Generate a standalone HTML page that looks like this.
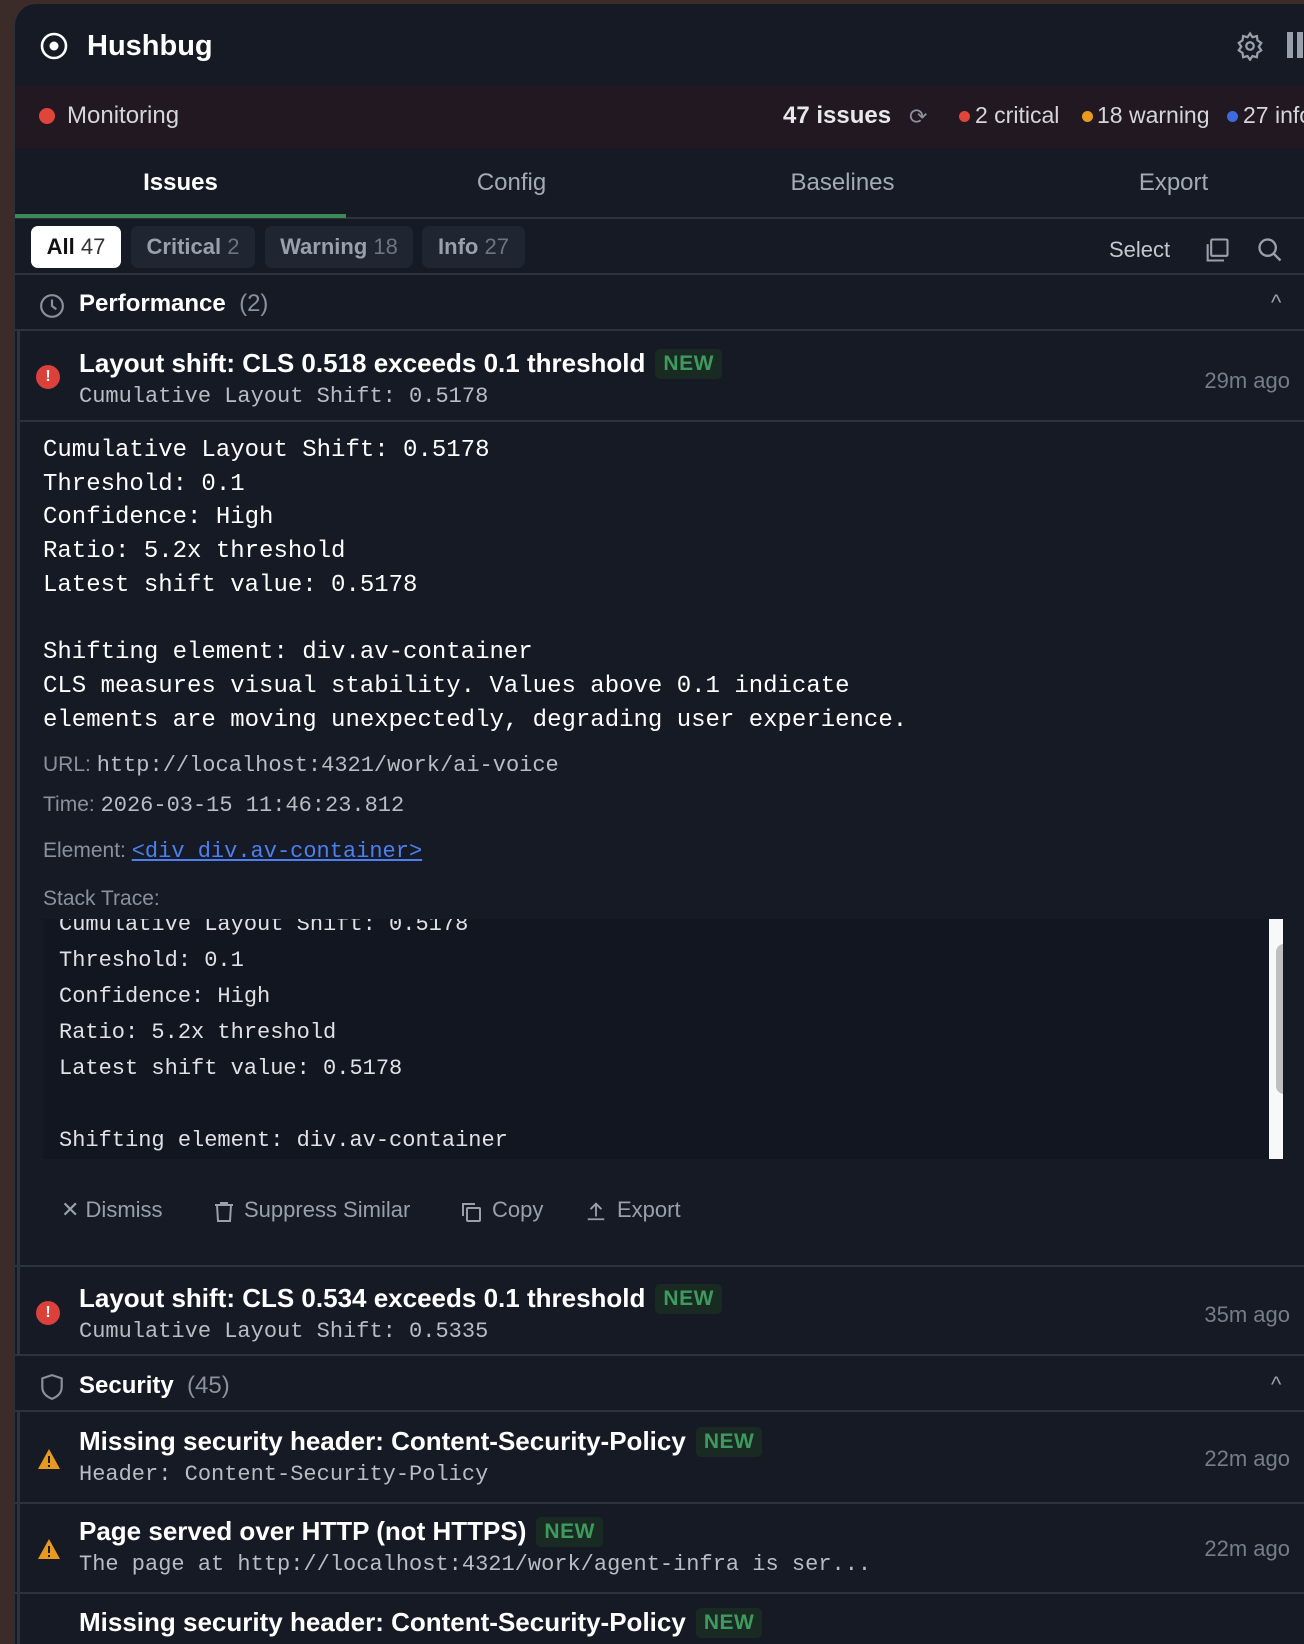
<!DOCTYPE html>
<html><head><meta charset="utf-8"><style>
*{margin:0;padding:0;box-sizing:border-box}
body{width:1304px;height:1626px;overflow:hidden;background:#3b2c29;font-family:"Liberation Sans",sans-serif;color:#e6e8ec;position:relative}
.win{position:absolute;left:14px;top:4px;width:1320px;height:1640px;background:#151a25;border-radius:22px 0 0 0;overflow:hidden;border-left:1px solid #2a2f3a}
.a{position:absolute;white-space:pre}
.mono{font-family:"Liberation Mono",monospace}
.hr{position:absolute;left:0;width:1320px;height:2px;background:#2c323e}
.new{display:inline-block;vertical-align:2px;margin-left:10px;background:#182a22;color:#3f9a5f;font-weight:bold;font-size:21px;padding:3px 8px;border-radius:5px;letter-spacing:0.5px}
.t{font-size:26px;font-weight:bold;color:#fff}
.chip{position:absolute;top:222px;height:42px;border-radius:7px;background:#1f2531;color:#9aa0ab;font-size:22px;font-weight:bold;line-height:42px;text-align:center}
.chip span{font-weight:normal;color:#6f7580}
.row{position:absolute;left:2px;width:1320px;border-left:3px solid #2c323e}
.ago{position:absolute;right:44px;font-size:22px;color:#777d88}
</style></head><body>
<div class="win">
<svg class="a" style="left:24px;top:27px" width="30" height="30" viewBox="0 0 30 30"><circle cx="15" cy="15" r="12" fill="none" stroke="#fff" stroke-width="2.6"/><circle cx="15" cy="15" r="4.5" fill="#fff"/></svg>
<div class="a" style="left:72px;top:26px;font-size:29px;font-weight:bold;color:#fff">Hushbug</div>
<svg class="a" style="left:1220px;top:27px" width="30" height="30" viewBox="0 0 24 24" fill="none" stroke="#9aa0ab" stroke-width="1.8"><circle cx="12" cy="12" r="3"/><path d="M12 2l2 3 3.5-1 .5 3.5 3 2-2 3 2 3-3 2-.5 3.5-3.5-1-2 3-2-3-3.5 1-.5-3.5-3-2 2-3-2-3 3-2 .5-3.5 3.5 1z"/></svg>
<div class="a" style="left:1272px;top:28px;width:6px;height:26px;background:#9aa0ab"></div>
<div class="a" style="left:1282px;top:28px;width:6px;height:26px;background:#9aa0ab"></div>
<div class="a" style="left:0;top:81px;width:1320px;height:63px;background:#211821"></div>
<div class="a" style="left:24px;top:104px;width:16px;height:16px;border-radius:50%;background:#e0453a"></div>
<div class="a" style="left:52px;top:98px;font-size:24px;color:#d4d6da">Monitoring</div>
<div class="a" style="left:768px;top:98px;font-size:24px;font-weight:bold;color:#e8e8ea">47 issues</div>
<div class="a" style="left:894px;top:100px;font-size:22px;color:#8a909c">⟳</div>
<div class="a" style="left:944px;top:107px;width:11px;height:11px;border-radius:50%;background:#e0453a"></div>
<div class="a" style="left:960px;top:98px;font-size:23px;color:#d4d6da">2 critical</div>
<div class="a" style="left:1067px;top:107px;width:11px;height:11px;border-radius:50%;background:#e89a20"></div>
<div class="a" style="left:1082px;top:98px;font-size:23px;color:#d4d6da">18 warning</div>
<div class="a" style="left:1212px;top:107px;width:11px;height:11px;border-radius:50%;background:#3d6ae0"></div>
<div class="a" style="left:1228px;top:98px;font-size:23px;color:#d4d6da">27 info</div>
<div class="a" style="left:0;top:165px;width:331px;text-align:center;font-size:24px;font-weight:bold;color:#fff">Issues</div>
<div class="a" style="left:331px;top:165px;width:331px;text-align:center;font-size:24px;color:#a4aab4">Config</div>
<div class="a" style="left:662px;top:165px;width:331px;text-align:center;font-size:24px;color:#a4aab4">Baselines</div>
<div class="a" style="left:993px;top:165px;width:331px;text-align:center;font-size:24px;color:#a4aab4">Export</div>
<div class="hr" style="top:213px"></div>
<div class="a" style="left:0;top:210px;width:331px;height:4px;background:#3a8a55"></div>
<div class="chip" style="left:16px;width:90px;background:#fff;color:#111">All <span style="color:#333">47</span></div>
<div class="chip" style="left:116px;width:124px">Critical <span>2</span></div>
<div class="chip" style="left:250px;width:148px">Warning <span>18</span></div>
<div class="chip" style="left:407px;width:103px">Info <span>27</span></div>
<div class="a" style="left:1094px;top:233px;font-size:22px;color:#c4c7cd">Select</div>
<svg class="a" style="left:1188px;top:232px" width="28" height="28" viewBox="0 0 24 24" fill="none" stroke="#9aa0ab" stroke-width="1.8"><rect x="7" y="3" width="14" height="14" rx="1"/><path d="M4 7v14h14"/></svg>
<svg class="a" style="left:1241px;top:232px" width="28" height="28" viewBox="0 0 24 24" fill="none" stroke="#9aa0ab" stroke-width="2"><circle cx="10" cy="10" r="7"/><path d="M15 15l6 6"/></svg>
<div class="hr" style="top:269px"></div>
<svg class="a" style="left:24px;top:289px" width="26" height="26" viewBox="0 0 24 24" fill="none" stroke="#8a909c" stroke-width="2"><circle cx="12" cy="12" r="10"/><path d="M12 6v6l4 3"/></svg>
<div class="a" style="left:64px;top:286px;font-size:24px;font-weight:bold;color:#fff">Performance <span style="font-weight:normal;color:#8a909c">&nbsp;(2)</span></div>
<div class="a" style="left:1256px;top:286px;font-size:22px;color:#9aa0ab">^</div>
<div class="hr" style="top:325px"></div>
<div class="row" style="top:327px;height:936px"></div>
<div class="a" style="left:21px;top:361px;width:24px;height:24px;border-radius:50%;background:#d9413a;color:#fff;font-size:16px;font-weight:bold;text-align:center;line-height:24px">!</div>
<div class="a t" style="left:64px;top:344px">Layout shift: CLS 0.518 exceeds 0.1 threshold<span class="new">NEW</span></div>
<div class="a mono" style="left:64px;top:380px;font-size:22px;color:#b8bcc4">Cumulative Layout Shift: 0.5178</div>
<div class="ago" style="top:364px">29m ago</div>
<div class="hr" style="top:416px;left:3px"></div>
<div class="a mono" style="left:28px;top:430px;font-size:24px;line-height:33.7px;color:#fff">Cumulative Layout Shift: 0.5178
Threshold: 0.1
Confidence: High
Ratio: 5.2x threshold
Latest shift value: 0.5178

Shifting element: div.av-container
CLS measures visual stability. Values above 0.1 indicate
elements are moving unexpectedly, degrading user experience.</div>
<div class="a" style="left:28px;top:749px;font-size:21px;color:#8a909c">URL: <span class="mono" style="font-size:22px;color:#b8bcc4">http://localhost:4321/work/ai-voice</span></div>
<div class="a" style="left:28px;top:789px;font-size:21px;color:#8a909c">Time: <span class="mono" style="font-size:22px;color:#b8bcc4">2026-03-15 11:46:23.812</span></div>
<div class="a" style="left:28px;top:835px;font-size:21px;color:#8a909c">Element: <span class="mono" style="font-size:22px;color:#4d7ff0;text-decoration:underline">&lt;div div.av-container&gt;</span></div>
<div class="a" style="left:28px;top:883px;font-size:21px;color:#8a909c">Stack Trace:</div>
<div class="a" style="left:28px;top:915px;width:1240px;height:240px;background:#121620;overflow:hidden">
<div class="a mono" style="left:16px;top:-12px;font-size:22px;line-height:36px;color:#dfe1e5">Cumulative Layout Shift: 0.5178
Threshold: 0.1
Confidence: High
Ratio: 5.2x threshold
Latest shift value: 0.5178

Shifting element: div.av-container</div>
<div class="a" style="left:1226px;top:0;width:30px;height:240px;background:#f8f8f8"></div>
<div class="a" style="left:1233px;top:25px;width:16px;height:150px;border-radius:8px;background:#bfbfbf"></div>
</div>
<div class="a" style="left:46px;top:1193px;font-size:22px;color:#9aa0ab">✕ Dismiss</div>
<svg class="a" style="left:197px;top:1196px" width="24" height="24" viewBox="0 0 24 24" fill="none" stroke="#9aa0ab" stroke-width="2"><path d="M3 5h18M5 5l1 16h12l1-16M9 5V3h6v2"/></svg>
<div class="a" style="left:229px;top:1193px;font-size:22px;color:#9aa0ab">Suppress Similar</div>
<svg class="a" style="left:444px;top:1196px" width="24" height="24" viewBox="0 0 24 24" fill="none" stroke="#9aa0ab" stroke-width="2"><rect x="8" y="8" width="13" height="13" rx="1"/><path d="M4 16V4h12"/></svg>
<div class="a" style="left:477px;top:1193px;font-size:22px;color:#9aa0ab">Copy</div>
<svg class="a" style="left:570px;top:1196px" width="22" height="22" viewBox="0 0 24 24" fill="none" stroke="#9aa0ab" stroke-width="2"><path d="M12 18V4M6 10l6-6 6 6M3 21h18"/></svg>
<div class="a" style="left:602px;top:1193px;font-size:22px;color:#9aa0ab">Export</div>
<div class="hr" style="top:1261px"></div>
<div class="row" style="top:1263px;height:88px"></div>
<div class="a" style="left:21px;top:1297px;width:24px;height:24px;border-radius:50%;background:#d9413a;color:#fff;font-size:16px;font-weight:bold;text-align:center;line-height:24px">!</div>
<div class="a t" style="left:64px;top:1279px">Layout shift: CLS 0.534 exceeds 0.1 threshold<span class="new">NEW</span></div>
<div class="a mono" style="left:64px;top:1315px;font-size:22px;color:#b8bcc4">Cumulative Layout Shift: 0.5335</div>
<div class="ago" style="top:1298px">35m ago</div>
<div class="hr" style="top:1350px"></div>
<svg class="a" style="left:24px;top:1369px" width="26" height="28" viewBox="0 0 24 26" fill="none" stroke="#8a909c" stroke-width="2"><path d="M12 2l9 3v8c0 6-4 9-9 11-5-2-9-5-9-11V5z"/></svg>
<div class="a" style="left:64px;top:1368px;font-size:24px;font-weight:bold;color:#fff">Security <span style="font-weight:normal;color:#8a909c">&nbsp;(45)</span></div>
<div class="a" style="left:1256px;top:1368px;font-size:22px;color:#9aa0ab">^</div>
<div class="hr" style="top:1406px"></div>
<div class="row" style="top:1408px;height:92px"></div>
<svg class="a" style="left:22px;top:1444px" width="24" height="22" viewBox="0 0 24 22"><path d="M12 1L23 21H1z" fill="#e89a20"/><path d="M12 8v7M12 17v2" stroke="#151a25" stroke-width="2"/></svg>
<div class="a t" style="left:64px;top:1422px">Missing security header: Content-Security-Policy<span class="new">NEW</span></div>
<div class="a mono" style="left:64px;top:1458px;font-size:22px;color:#b8bcc4">Header: Content-Security-Policy</div>
<div class="ago" style="top:1442px">22m ago</div>
<div class="hr" style="top:1498px"></div>
<div class="row" style="top:1500px;height:90px"></div>
<svg class="a" style="left:22px;top:1534px" width="24" height="22" viewBox="0 0 24 22"><path d="M12 1L23 21H1z" fill="#e89a20"/><path d="M12 8v7M12 17v2" stroke="#151a25" stroke-width="2"/></svg>
<div class="a t" style="left:64px;top:1512px">Page served over HTTP (not HTTPS)<span class="new">NEW</span></div>
<div class="a mono" style="left:64px;top:1548px;font-size:22px;color:#b8bcc4">The page at http://localhost:4321/work/agent-infra is ser...</div>
<div class="ago" style="top:1532px">22m ago</div>
<div class="hr" style="top:1588px"></div>
<div class="row" style="top:1590px;height:60px"></div>
<div class="a t" style="left:64px;top:1603px">Missing security header: Content-Security-Policy<span class="new">NEW</span></div>
</div>
</body></html>
